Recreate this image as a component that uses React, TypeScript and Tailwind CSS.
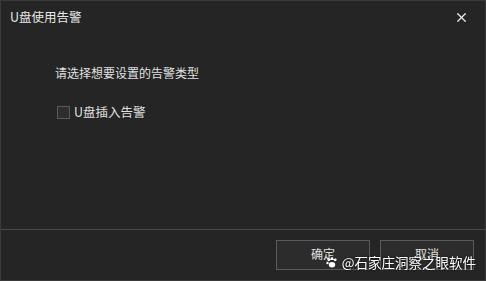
import { X } from "lucide-react";

export default function App() {
  return (
    <div className="w-[486px] h-[281px] bg-[#252525] border border-[#3a3a3a] flex flex-col text-[#e6e6e6] text-[12px] overflow-hidden" style={{ fontFamily: '"Microsoft YaHei", "Noto Sans CJK SC", sans-serif' }}>
      {/* Title bar */}
      <div className="h-[32px] flex items-center justify-between pl-[9px] pr-[16px]">
        <span className="text-[12.5px] text-[#e8e8e8]">U盘使用告警</span>
        <X size={15} strokeWidth={2} className="text-[#ececec]" />
      </div>

      {/* Body */}
      <div className="flex-1 flex flex-col pl-[54px] pt-[31px]">
        <p className="text-[12px] text-[#e0e0e0] leading-[18px]">请选择想要设置的告警类型</p>
        <label className="flex items-center gap-[4px] mt-[21px] ml-[2px]">
          <span className="w-[13px] h-[13px] border border-[#5a5a5a] bg-[#2e2e2e]" />
          <span className="text-[12.5px] text-[#e0e0e0] leading-[18px]">U盘插入告警</span>
        </label>
      </div>

      {/* Footer */}
      <div className="h-[51px] border-t border-[#4a4a4a] relative flex justify-end items-start gap-[10px] pr-[11px] pt-[10px]">
        <button className="w-[94px] h-[30px] border border-[#5a5a5a] bg-[#2c2c2c] text-[12px] text-[#e0e0e0] pb-[2px]">确定</button>
        <button className="w-[94px] h-[30px] border border-[#5a5a5a] bg-[#2c2c2c] text-[12px] text-[#e0e0e0] pb-[2px]">取消</button>

        {/* Watermark */}
        <div className="absolute right-[9px] top-[22px] flex items-center gap-[4px] text-white text-[13.5px] leading-[20px]">
          <svg width="12" height="11" viewBox="0 0 13 12" fill="white">
            <circle cx="3" cy="3" r="1.5" />
            <circle cx="6.5" cy="1.8" r="1.5" />
            <circle cx="10" cy="3" r="1.5" />
            <circle cx="1.6" cy="6.6" r="1.3" />
            <ellipse cx="6.5" cy="8.5" rx="3.5" ry="3" />
          </svg>
          <span className="drop-shadow-[0_0_1px_rgba(0,0,0,0.8)]">@石家庄洞察之眼软件</span>
        </div>
      </div>
    </div>
  );
}
